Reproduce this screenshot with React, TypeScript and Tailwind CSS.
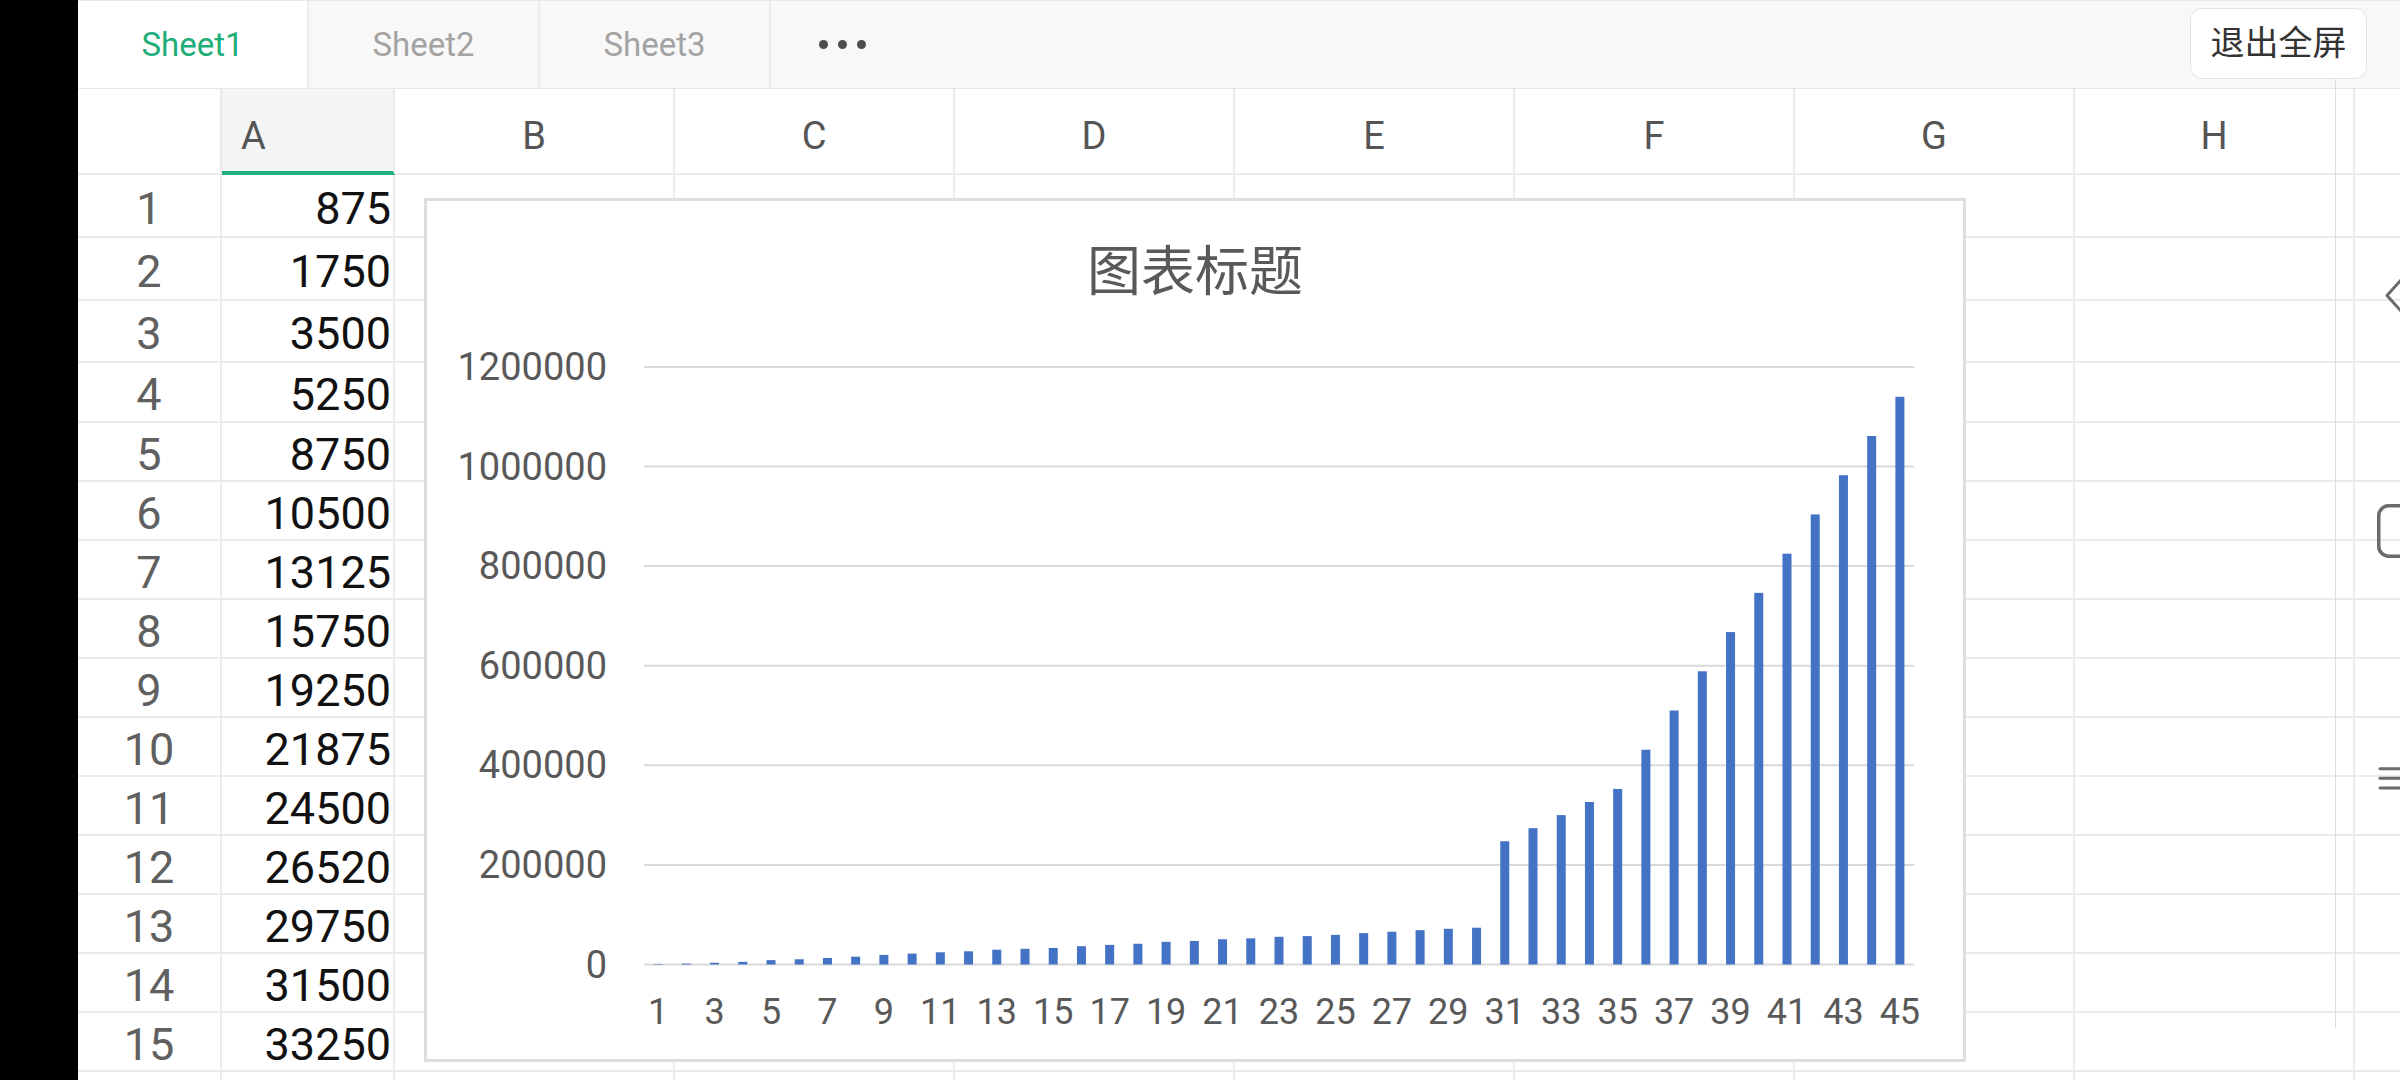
import React from 'react';

// Column A data, also the series plotted in the chart (rows 1-45)
const values = [
  875, 1750, 3500, 5250, 8750, 10500, 13125, 15750, 19250, 21875, 24500, 26520, 29750, 31500, 33250,
  36750, 39375, 41650, 45500, 47250, 50750, 52500, 55650, 57050, 59500, 63000, 65800, 68950, 71750,
  73850, 247500, 273750, 300000, 326250, 352500, 431250, 510000, 588750, 667500, 746250, 825000,
  903750, 982500, 1061250, 1140000,
];

// rows 1-15 are on screen, row 16 only shows its top edge
const rowHeights = [63, 63, 62, 60, 59, 59, 59, 59, 59, 59, 59, 59, 59, 59, 59];
const wideCols = ['B', 'C', 'D', 'E', 'F', 'G', 'H', ''];

const font = "font-['Roboto','Noto_Sans_CJK_SC',sans-serif]";

const SheetTabs: React.FC = () => (
  <div className="flex h-[89px] shrink-0 border-t border-b border-[#e6e6e6] bg-[#f8f8f8]">
    <div className="flex w-[231px] items-center justify-center border-r-2 border-[#ececec] bg-white text-[33px] text-[#1fae78]">
      Sheet1
    </div>
    <div className="flex w-[231px] items-center justify-center border-r-2 border-[#ececec] text-[33px] text-[#a3a3a3]">
      Sheet2
    </div>
    <div className="flex w-[231px] items-center justify-center border-r-2 border-[#ececec] text-[33px] text-[#a3a3a3]">
      Sheet3
    </div>
    <div className="flex w-[142px] items-center justify-center gap-[10px]">
      <span className="h-[9px] w-[9px] rounded-full bg-[#4d4d4d]" />
      <span className="h-[9px] w-[9px] rounded-full bg-[#4d4d4d]" />
      <span className="h-[9px] w-[9px] rounded-full bg-[#4d4d4d]" />
    </div>
    <button className="ml-auto mr-[33px] mt-[7px] flex h-[71px] w-[177px] items-center justify-center rounded-[12px] border border-[#e3e3e3] bg-white text-[34px] text-[#333]">
      退出全屏
    </button>
  </div>
);

const HeaderRow: React.FC = () => (
  <div className="flex h-[86px] shrink-0">
    <div className="w-[144px] shrink-0 border-r-2 border-b-2 border-[#ebebeb]" />
    <div className="flex w-[173px] shrink-0 items-center border-r-2 border-b-4 border-r-[#ebebeb] border-b-[#22b07d] bg-[#f4f5f7] pl-[19px] pt-[12px] text-[38px] text-[#555]">
      A
    </div>
    {wideCols.map((c, i) => (
      <div
        key={i}
        className="flex w-[280px] shrink-0 items-center justify-center border-r-2 border-b-2 border-[#ebebeb] pt-[10px] text-[38px] text-[#555]"
      >
        {c}
      </div>
    ))}
  </div>
);

const GridRow: React.FC<{ index: number; height: number }> = ({ index, height }) => (
  <div className="flex shrink-0" style={{ height }}>
    <div className="flex w-[144px] shrink-0 items-center justify-center border-r-2 border-b-2 border-[#ebebeb] pt-[6px] text-[45px] text-[#606060]">
      {index + 1}
    </div>
    <div className="flex w-[173px] shrink-0 items-center justify-end border-r-2 border-b-2 border-[#ebebeb] pr-[2px] pt-[6px] text-[45px] text-[#111]">
      {values[index]}
    </div>
    {wideCols.map((_, i) => (
      <div key={i} className="w-[280px] shrink-0 border-r-2 border-b-2 border-[#ebebeb]" />
    ))}
  </div>
);

// Column chart drawn over the grid
const BarChart: React.FC = () => {
  const left = 217;
  const right = 1487;
  const zeroY = 663.5;
  const step = 99.6;
  const scale = step / 200000;
  const slot = (right - left) / values.length;
  const ticks = [0, 200000, 400000, 600000, 800000, 1000000, 1200000];

  return (
    <div className="absolute left-[424px] top-[198px] flex h-[864px] w-[1542px] flex-col border-[3px] border-[#dedede] bg-white">
      <div className="h-[100px] pt-[44px] text-center text-[54px] leading-[56px] text-[#595959]">
        图表标题
      </div>
      <svg width={1536} height={758} viewBox="0 0 1536 758">
        {ticks.map((t, k) => (
          <g key={t}>
            <line x1={left} x2={right} y1={zeroY - k * step} y2={zeroY - k * step} stroke="#d9d9d9" strokeWidth={2} />
            <text
              x={180}
              y={zeroY - k * step}
              textAnchor="end"
              dominantBaseline="central"
              fontSize={38}
              fill="#595959"
              fontFamily="Roboto, sans-serif"
            >
              {t}
            </text>
          </g>
        ))}
        {values.map((v, i) => {
          const h = v * scale;
          const cx = left + (i + 0.5) * slot;
          return <rect key={i} x={cx - 4.5} y={zeroY - h} width={9} height={h} fill="#4472c4" />;
        })}
        {values.map((_, i) =>
          i % 2 === 0 ? (
            <text
              key={i}
              x={left + (i + 0.5) * slot}
              y={710.5}
              textAnchor="middle"
              dominantBaseline="central"
              fontSize={36}
              fill="#595959"
              fontFamily="Roboto, sans-serif"
            >
              {i + 1}
            </text>
          ) : null
        )}
      </svg>
    </div>
  );
};

// Side toolbar, mostly scrolled off the right edge
const SideTools: React.FC = () => (
  <svg className="absolute left-[2370px] top-[270px]" width={30} height={530} viewBox="0 0 30 530">
    <polyline points="31,10 17,25.5 31,41" fill="none" stroke="#6b6b6b" strokeWidth={3} strokeLinejoin="round" />
    <rect x={8.75} y={235.75} width={40} height={50.5} rx={10} fill="none" stroke="#6b6b6b" strokeWidth={3.5} />
    <line x1={10} x2={40} y1={498.7} y2={498.7} stroke="#6b6b6b" strokeWidth={3} strokeLinecap="round" />
    <line x1={10} x2={40} y1={508.3} y2={508.3} stroke="#6b6b6b" strokeWidth={3} strokeLinecap="round" />
    <line x1={10} x2={40} y1={517.9} y2={517.9} stroke="#6b6b6b" strokeWidth={3} strokeLinecap="round" />
  </svg>
);

const App: React.FC = () => {
  return (
    <div className={`relative flex h-[1080px] w-[2400px] overflow-hidden bg-white ${font}`}>
      <div className="h-full w-[78px] shrink-0 bg-black" />
      <div className="flex min-w-0 flex-1 flex-col overflow-hidden">
        <SheetTabs />
        <HeaderRow />
        {rowHeights.map((h, i) => (
          <GridRow key={i} index={i} height={h} />
        ))}
        <div className="flex h-[59px] shrink-0">
          <div className="w-[144px] shrink-0 border-r-2 border-[#ebebeb]" />
          <div className="w-[173px] shrink-0 border-r-2 border-[#ebebeb]" />
          {wideCols.map((_, i) => (
            <div key={i} className="w-[280px] shrink-0 border-r-2 border-[#ebebeb]" />
          ))}
        </div>
      </div>
      <BarChart />
      <div className="absolute left-[2335px] top-[79px] h-[949px] w-px bg-[#dcdcdc]" />
      <SideTools />
    </div>
  );
};

export default App;
